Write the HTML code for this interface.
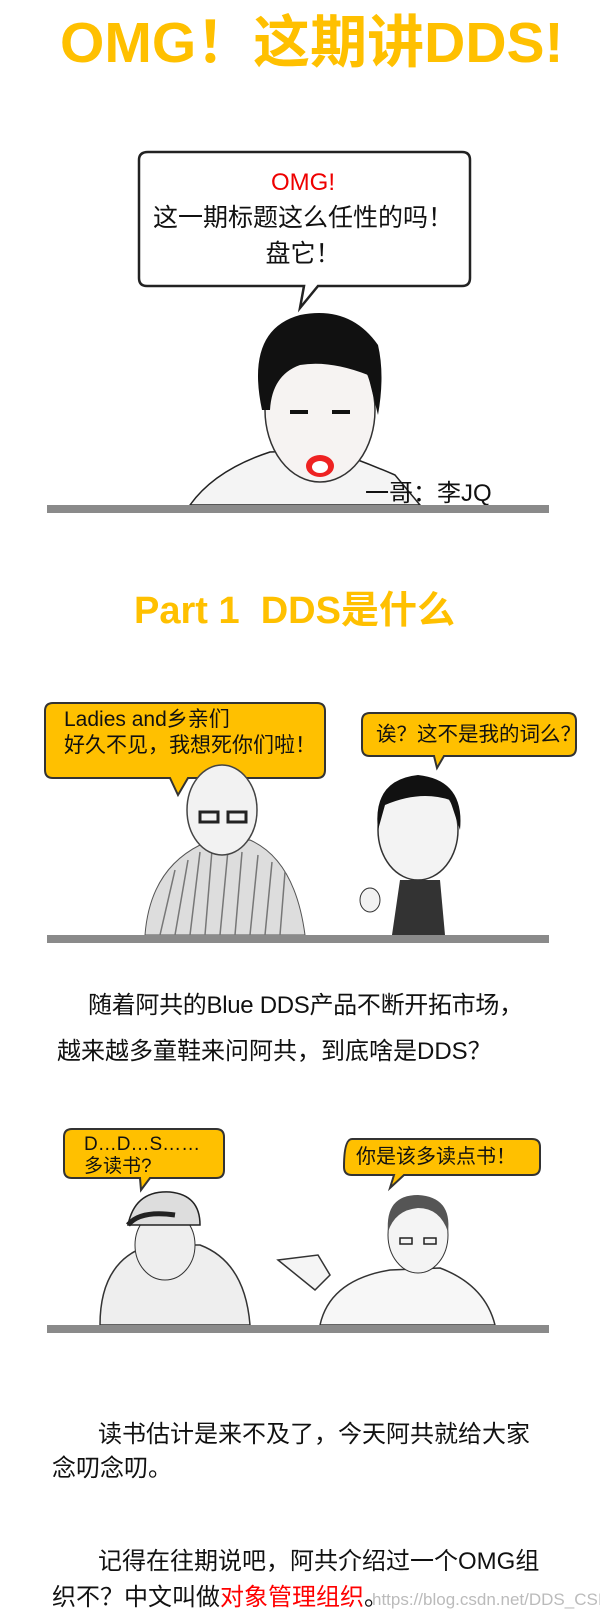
<!DOCTYPE html>
<html><head><meta charset="utf-8"><style>
*{margin:0;padding:0}
body{width:600px;height:1617px;background:#fff;position:relative;overflow:hidden;font-family:"Liberation Sans","Noto Sans CJK SC",sans-serif;color:#111}
.a{position:absolute;white-space:nowrap}
.bar{position:absolute;left:47px;width:502px;height:8px;background:#8a8a8a}
.t{line-height:1}
</style></head><body>
<div class="a t" style="left:60px;top:15px;font-size:57px;font-weight:bold;color:#FFC000">OMG！这期讲DDS!</div>

<svg class="a" style="left:0;top:0" width="600" height="1617">
<path d="M148 152 H462 Q470 152 470 160 V278 Q470 286 462 286 H318 L300 308 L304 286 H147 Q139 286 139 278 V160 Q139 152 148 152Z" fill="#fff" stroke="#222" stroke-width="2.5"/>
<path d="M190 505 Q215 470 270 452 L330 450 Q360 460 395 475 L420 505Z" fill="#f4f4f4" stroke="#222" stroke-width="1.5"/>
<ellipse cx="320" cy="410" rx="55" ry="72" fill="#f6f3f2" stroke="#333" stroke-width="1.5"/>
<path d="M262 410 Q245 330 300 315 Q350 305 378 345 Q385 375 378 415 L368 375 Q330 360 300 365 Q272 375 270 410Z" fill="#111"/>
<path d="M290 412 H308 M332 412 H350" stroke="#111" stroke-width="4"/>
<ellipse cx="320" cy="466" rx="14" ry="11" fill="#e22"/>
<ellipse cx="320" cy="467" rx="8" ry="6" fill="#fff"/>
<path d="M53 703 H317 Q325 703 325 711 V770 Q325 778 317 778 H188 L178 795 L170 778 H53 Q45 778 45 770 V711 Q45 703 53 703Z" fill="#FFC000" stroke="#333" stroke-width="2"/>
<path d="M370 713 H568 Q576 713 576 721 V748 Q576 756 568 756 H444 L437 768 L434 756 H370 Q362 756 362 748 V721 Q362 713 370 713Z" fill="#FFC000" stroke="#333" stroke-width="2"/>
<path d="M145 935 Q150 870 200 845 L250 840 Q295 860 305 935Z" fill="#ddd" stroke="#555"/>
<g stroke="#777" stroke-width="1.5"><path d="M160 935 L175 870 M175 935 L188 860 M190 935 L200 852 M205 935 L212 850 M220 935 L228 850 M235 935 L242 852 M250 935 L258 855 M265 935 L272 862 M280 935 L285 872"/></g>
<ellipse cx="222" cy="810" rx="35" ry="45" fill="#f2f2f2" stroke="#444" stroke-width="1.5"/>
<path d="M200 812 h18 v10 h-18z M228 812 h18 v10 h-18z" fill="none" stroke="#222" stroke-width="3"/>
<path d="M400 880 L392 935 H445 L440 880Z" fill="#333"/>
<ellipse cx="418" cy="830" rx="40" ry="50" fill="#f3f3f3" stroke="#333" stroke-width="1.5"/>
<path d="M378 830 Q372 780 418 775 Q465 780 460 830 L450 800 Q420 790 385 805Z" fill="#111"/>
<ellipse cx="370" cy="900" rx="10" ry="12" fill="#f2f2f2" stroke="#333"/>
<path d="M72 1129 H216 Q224 1129 224 1137 V1170 Q224 1178 216 1178 H150 L141 1190 L140 1178 H72 Q64 1178 64 1170 V1137 Q64 1129 72 1129Z" fill="#FFC000" stroke="#333" stroke-width="2"/>
<path d="M352 1139 H532 Q540 1139 540 1147 V1167 Q540 1175 532 1175 H404 L390 1188 L394 1175 H352 Q344 1175 344 1167 V1167 Q344 1139 352 1139Z" fill="#FFC000" stroke="#333" stroke-width="2"/>
<path d="M100 1325 Q100 1260 150 1245 L200 1245 Q245 1262 250 1325Z" fill="#eee" stroke="#333" stroke-width="1.5"/>
<ellipse cx="165" cy="1245" rx="30" ry="35" fill="#eee" stroke="#333"/>
<path d="M128 1225 Q135 1190 170 1192 Q200 1195 200 1225Z" fill="#ddd" stroke="#222" stroke-width="1.5"/>
<path d="M128 1225 Q140 1210 175 1215" stroke="#222" stroke-width="5" fill="none"/>
<path d="M278 1260 L318 1255 L330 1275 L315 1290 Z" fill="#f5f5f5" stroke="#333" stroke-width="1.5"/>
<path d="M320 1325 Q330 1280 390 1270 L440 1268 Q485 1285 495 1325Z" fill="#f7f7f7" stroke="#333" stroke-width="1.5"/>
<ellipse cx="418" cy="1235" rx="30" ry="38" fill="#f4f4f4" stroke="#333"/>
<path d="M388 1232 Q385 1195 418 1195 Q452 1197 448 1232 Q440 1208 418 1208 Q395 1210 388 1232Z" fill="#555"/>
<path d="M400 1238 h12 v6 h-12z M424 1238 h12 v6 h-12z" fill="none" stroke="#222" stroke-width="1.5"/>
</svg>

<div class="a t" style="left:0;width:606px;text-align:center;top:171px;font-size:24px;color:#e00">OMG!</div>
<div class="a t" style="left:0;width:606px;text-align:center;top:206px;font-size:25px">这一期标题这么任性的吗！</div>
<div class="a t" style="left:0;width:606px;text-align:center;top:242px;font-size:25px">盘它！</div>
<div class="a t" style="left:365px;top:482px;font-size:24px">一哥：李JQ</div>
<div class="bar" style="top:505px"></div>

<div class="a t" style="left:134px;top:592px;font-size:38px;font-weight:bold;color:#FFC000">Part 1&nbsp; DDS是什么</div>

<div class="a t" style="left:64px;top:709px;font-size:21px">Ladies and乡亲们</div>
<div class="a t" style="left:64px;top:735px;font-size:21px">好久不见，我想死你们啦！</div>
<div class="a t" style="left:376px;top:725px;font-size:20.5px">诶？这不是我的词么？</div>
<div class="bar" style="top:935px"></div>

<div class="a t" style="left:88px;top:994px;font-size:24px;letter-spacing:-0.3px">随着阿共的Blue DDS产品不断开拓市场，</div>
<div class="a t" style="left:57px;top:1040px;font-size:24px">越来越多童鞋来问阿共，到底啥是DDS？</div>

<div class="a t" style="left:84px;top:1135px;font-size:19px">D…D…S……</div>
<div class="a t" style="left:84px;top:1157px;font-size:19px">多读书?</div>
<div class="a t" style="left:356px;top:1147px;font-size:20px">你是该多读点书！</div>
<div class="bar" style="top:1325px"></div>

<div class="a t" style="left:98px;top:1423px;font-size:24px">读书估计是来不及了，今天阿共就给大家</div>
<div class="a t" style="left:52px;top:1457px;font-size:24px">念叨念叨。</div>
<div class="a t" style="left:98px;top:1550px;font-size:24px">记得在往期说吧，阿共介绍过一个OMG组</div>
<div class="a t" style="left:52px;top:1586px;font-size:24px">织不？中文叫做<span style="color:#f00">对象管理组织</span>。</div>
<div class="a t" style="left:372px;top:1591px;font-size:17px;color:rgba(170,170,170,0.8)">https://blog.csdn.net/DDS_CSIT</div>
</body></html>
